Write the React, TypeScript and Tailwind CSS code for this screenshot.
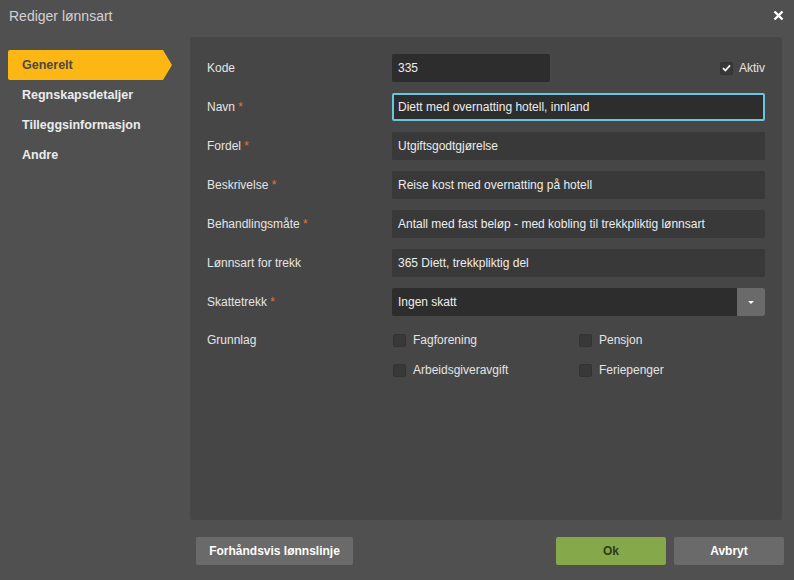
const rows: { label: string; value: string; req?: boolean }[] = [
  { label: 'Fordel', value: 'Utgiftsgodtgjørelse', req: true },
  { label: 'Beskrivelse', value: 'Reise kost med overnatting på hotell', req: true },
  { label: 'Behandlingsmåte', value: 'Antall med fast beløp - med kobling til trekkpliktig lønnsart', req: true },
  { label: 'Lønnsart for trekk', value: '365 Diett, trekkpliktig del' },
];

const Label = ({ text, req }: { text: string; req?: boolean }) => (
  <div className="w-[185px] shrink-0 text-[12px] text-[#e4e4e4]">
    {text}
    {req && <span className="text-[#e0782a]"> *</span>}
  </div>
);

const Box = ({ checked }: { checked?: boolean }) => (
  <span className="w-[13px] h-[13px] rounded-[2px] bg-[#383838] border border-[#333] flex items-center justify-center">
    {checked && (
      <svg width="9" height="8" viewBox="0 0 9 8">
        <path d="M1 4.2 L3.4 6.5 L8 1.3" stroke="#f2f2f2" strokeWidth="1.8" fill="none" />
      </svg>
    )}
  </span>
);

const Check = ({ text }: { text: string }) => (
  <label className="flex items-center gap-[7px] text-[12px] text-[#e4e4e4] w-[186px]">
    <Box />
    {text}
  </label>
);

export default function App() {
  return (
    <div
      className="w-[794px] h-[580px] bg-[#505050] flex flex-col overflow-hidden"
      style={{ fontFamily: '"Liberation Sans", Arial, sans-serif' }}
    >
      {/* Title bar */}
      <div className="h-[37px] flex items-start justify-between pl-[9px] pr-[10px] pt-[6px]">
        <span className="text-[14px] text-[#d2d2d2]">Rediger lønnsart</span>
        <svg width="11" height="11" viewBox="0 0 11 11" className="mt-[4px]">
          <path d="M1.5 1.5 L9.5 9.5 M9.5 1.5 L1.5 9.5" stroke="#fff" strokeWidth="2.4" />
        </svg>
      </div>

      <div className="flex flex-1 min-h-0">
        {/* Sidebar */}
        <div className="w-[190px] shrink-0 pl-[8px] pt-[13px]">
          <div className="relative h-[30px] w-[155px] bg-[#fdb714] rounded-l-[2px] flex items-center pl-[14px] text-[12.5px] font-bold text-[#4a4a4a]">
            Generelt
            <span className="absolute right-[-9px] top-0 w-0 h-0 border-y-[15px] border-y-transparent border-l-[9px] border-l-[#fdb714]" />
          </div>
          {['Regnskapsdetaljer', 'Tilleggsinformasjon', 'Andre'].map((t) => (
            <div key={t} className="h-[30px] flex items-center pl-[14px] text-[12.5px] font-bold text-[#ececec]">
              {t}
            </div>
          ))}
        </div>

        {/* Main panel */}
        <div className="w-[592px] h-[483px] bg-[#464646] rounded-[3px] px-[17px] pt-[17px] flex flex-col gap-[11px]">
          <div className="flex items-center h-[28px]">
            <Label text="Kode" />
            <div className="w-[158px] h-[28px] rounded-[2px] bg-[#2d2d2d] flex items-center px-[6px] text-[12px] text-[#ededed]">
              335
            </div>
            <div className="ml-auto flex items-center gap-[6px] text-[12px] text-[#e4e4e4]">
              <Box checked />
              Aktiv
            </div>
          </div>

          <div className="flex items-center h-[28px]">
            <Label text="Navn" req />
            <div className="flex-1 h-[28px] rounded-[2px] bg-[#2d2d2d] border-2 border-[#6ac6e0] flex items-center px-[4px] text-[12px] text-[#ededed]">
              Diett med overnatting hotell, innland
            </div>
          </div>

          {rows.map((r) => (
            <div key={r.label} className="flex items-center h-[28px]">
              <Label text={r.label} req={r.req} />
              <div className="flex-1 h-[28px] rounded-[2px] bg-[#393939] flex items-center px-[6px] text-[12px] text-[#ededed]">
                {r.value}
              </div>
            </div>
          ))}

          <div className="flex items-center h-[28px]">
            <Label text="Skattetrekk" req />
            <div className="flex-1 h-[28px] rounded-[2px] bg-[#2d2d2d] flex items-center text-[12px] text-[#ededed]">
              <span className="flex-1 px-[6px]">Ingen skatt</span>
              <span className="w-[28px] h-[28px] bg-[#6a6a6a] rounded-r-[2px] flex items-center justify-center">
                <span className="w-0 h-0 border-x-[3px] border-x-transparent border-t-[3px] border-t-white" />
              </span>
            </div>
          </div>

          <div className="flex items-start">
            <div className="pt-[4px]">
              <Label text="Grunnlag" />
            </div>
            <div className="flex flex-col gap-[12px] pt-[4px] pl-px">
              <div className="flex">
                <Check text="Fagforening" />
                <Check text="Pensjon" />
              </div>
              <div className="flex">
                <Check text="Arbeidsgiveravgift" />
                <Check text="Feriepenger" />
              </div>
            </div>
          </div>
        </div>
      </div>

      {/* Footer */}
      <div className="h-[60px] flex items-start pt-[17px] pl-[196px] pr-[10px] gap-[8px]">
        <button className="h-[28px] w-[157px] rounded-[2px] bg-[#6a6a6a] text-[12px] font-bold text-white">
          Forhåndsvis lønnslinje
        </button>
        <button className="ml-auto h-[28px] w-[110px] rounded-[2px] bg-[#85a94a] text-[12px] font-bold text-[#2e3a1a]">
          Ok
        </button>
        <button className="h-[28px] w-[110px] rounded-[2px] bg-[#6a6a6a] text-[12px] font-bold text-white">
          Avbryt
        </button>
      </div>
    </div>
  );
}
